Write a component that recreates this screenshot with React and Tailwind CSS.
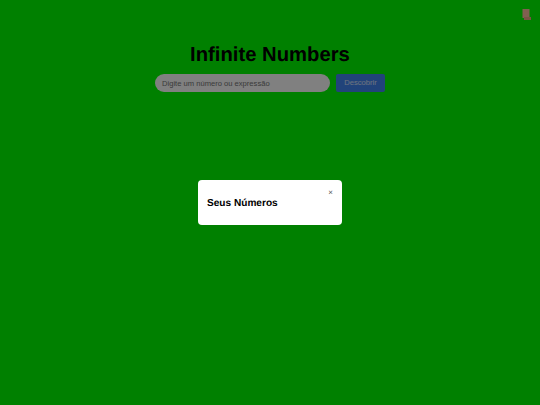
export default function App() {
  return (
    <div className="relative h-[405px] w-[540px] overflow-hidden bg-[#00ff00] font-['Liberation_Sans',sans-serif] [text-rendering:geometricPrecision]">
      <div className="flex justify-end pt-[9px] pr-[9px]">
        {/* scroll icon */}
        <svg width="9" height="11" viewBox="0 0 9 11">
          <rect x="0.5" y="0" width="7" height="9" fill="#ffc0a0" />
          <rect x="2" y="8" width="7" height="3" fill="#f0a888" />
        </svg>
      </div>
      <div className="flex flex-col items-center pt-[22.5px]">
        <h1 className="text-[20.25px] leading-[25px] font-bold text-black">Infinite Numbers</h1>
        <div className="mt-[6.5px] flex items-center gap-[6px]">
          <input
            readOnly
            placeholder="Digite um número ou expressão"
            className="h-[18px] w-[175px] rounded-full bg-white px-[7px] text-[7.6px] text-black placeholder:text-[#757575]"
          />
          <button className="h-[18px] w-[49px] rounded-[2px] bg-[#4285f4] text-[7.6px] text-white/80">Descobrir</button>
        </div>
      </div>
      <div className="absolute inset-0 flex items-center justify-center bg-[rgba(0,0,0,0.498)]">
        <div className="relative h-[45px] w-[144px] rounded-[4px] bg-white px-[9px] pt-[17px]">
          <span className="absolute top-[8px] right-[9px] text-[8px] leading-[10px] text-[#555]">×</span>
          <h2 className="text-[10.1px] leading-[13px] font-bold text-black">Seus Números</h2>
        </div>
      </div>
    </div>
  );
}
